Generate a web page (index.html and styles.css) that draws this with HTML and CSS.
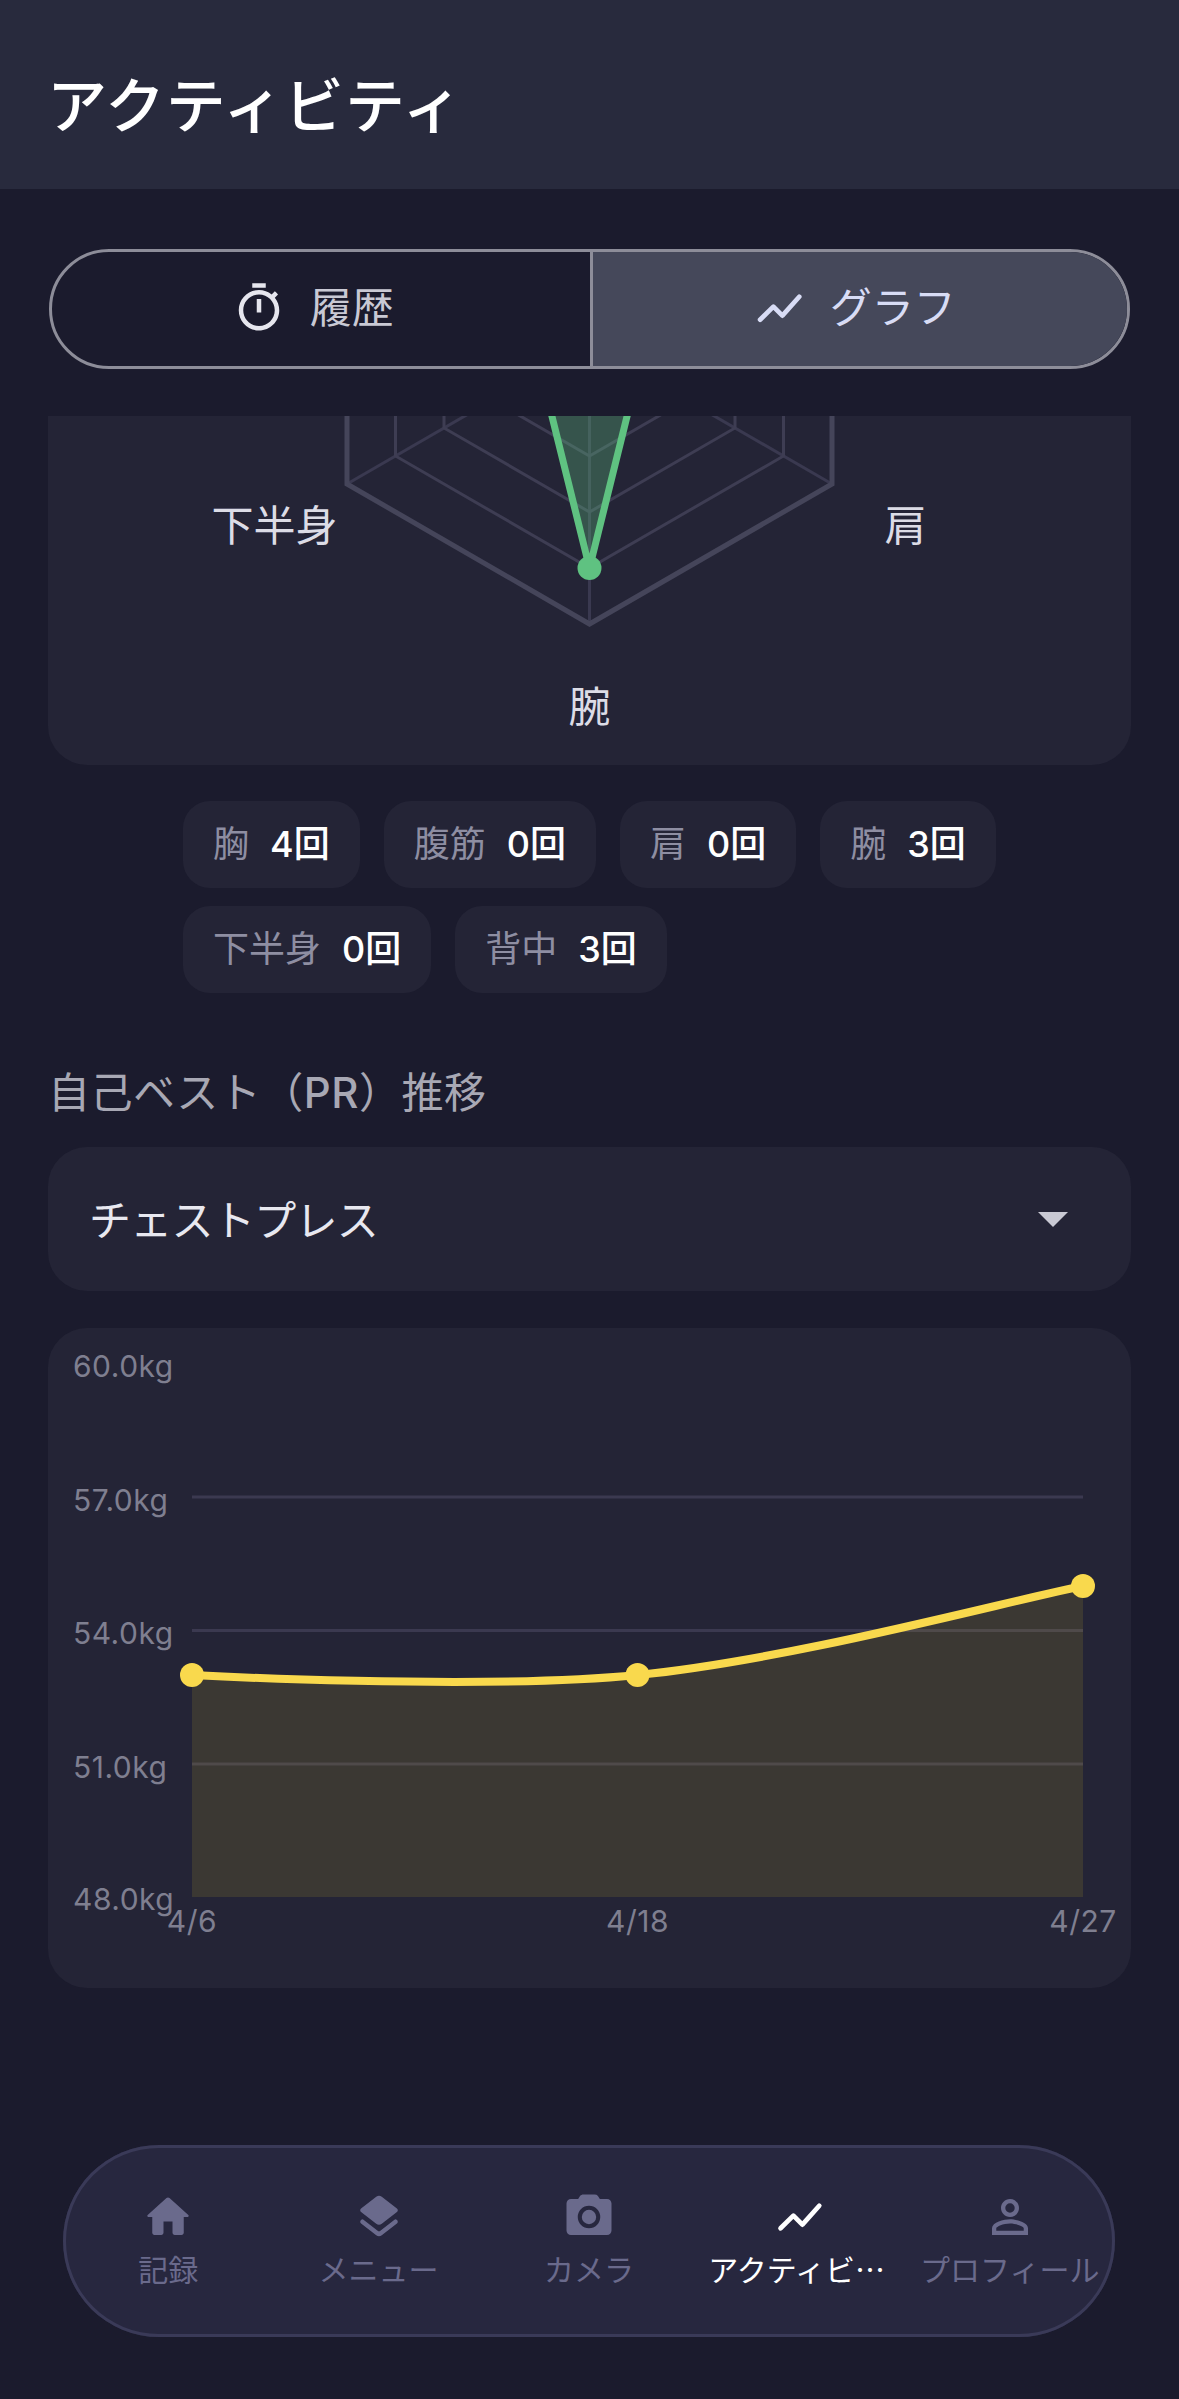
FILE: index.html
```html
<!DOCTYPE html>
<html lang="ja">
<head>
<meta charset="utf-8">
<title>アクティビティ</title>
<link rel="stylesheet" href="styles.css">
</head>
<body>
<div class="app">
  <header class="header"><h1 class="title">アクティビティ</h1></header>

  <div class="segment-wrap">
    <div class="segment">
      <div class="seg-btn">
        <svg class="seg-icon seg-icon-timer" viewBox="0 0 24 24"><path d="M15 1H9v2h6V1zm-4 13h2V8h-2v6zm8.03-6.61l1.42-1.42c-.43-.51-.9-.99-1.41-1.41l-1.42 1.42C16.07 4.74 14.12 4 12 4c-4.97 0-9 4.03-9 9s4.02 9 9 9 9-4.03 9-9c0-2.12-.74-4.07-1.97-5.61zM12 20c-3.87 0-7-3.13-7-7s3.13-7 7-7 7 3.13 7 7-3.13 7-7 7z"/></svg>
        <span class="seg-text">履歴</span>
      </div>
      <div class="seg-btn seg-btn-active">
        <svg class="seg-icon" viewBox="0 0 24 24"><polyline class="chart-stroke" points="3.6,17.2 9.5,11.4 13.5,15.4 21,7"/></svg>
        <span class="seg-text">グラフ</span>
      </div>
    </div>
  </div>

  <main class="scroll">
    <section class="radar-card">
      <svg class="radar" viewBox="48 416 1083 349">
        <g class="spokes">
          <line x1="589.5" y1="344" x2="589.5" y2="64"/>
          <line x1="589.5" y1="344" x2="832" y2="204"/>
          <line x1="589.5" y1="344" x2="832" y2="484"/>
          <line x1="589.5" y1="344" x2="589.5" y2="624"/>
          <line x1="589.5" y1="344" x2="347" y2="484"/>
          <line x1="589.5" y1="344" x2="347" y2="204"/>
        </g>
        <g class="rings">
          <polygon points="589.5,288 638,316 638,372 589.5,400 541,372 541,316"/>
          <polygon points="589.5,232 686.5,288 686.5,400 589.5,456 492.5,400 492.5,288"/>
          <polygon points="589.5,176 735,260 735,428 589.5,512 444,428 444,260"/>
          <polygon points="589.5,120 783.5,232 783.5,456 589.5,568 395.5,456 395.5,232"/>
          <polygon class="ring-outer" points="589.5,64 832,204 832,484 589.5,624 347,484 347,204"/>
        </g>
        <polygon class="radar-data" points="589.5,64 638,316 638,372 589.5,568 541,372 395.5,232"/>
        <circle class="radar-dot" cx="589.5" cy="568" r="12"/>
        <text class="radar-label" x="274.5" y="541">下半身</text>
        <text class="radar-label" x="905.5" y="541">肩</text>
        <text class="radar-label" x="589.5" y="722">腕</text>
      </svg>
    </section>

    <div class="chips">
      <div class="chip"><span class="chip-label">胸</span><span class="chip-value">4回</span></div>
      <div class="chip"><span class="chip-label">腹筋</span><span class="chip-value">0回</span></div>
      <div class="chip"><span class="chip-label">肩</span><span class="chip-value">0回</span></div>
      <div class="chip"><span class="chip-label">腕</span><span class="chip-value">3回</span></div>
      <div class="chip"><span class="chip-label">下半身</span><span class="chip-value">0回</span></div>
      <div class="chip"><span class="chip-label">背中</span><span class="chip-value">3回</span></div>
    </div>

    <h2 class="section-title">自己ベスト（<span class="latin">PR</span>）推移</h2>

    <div class="dropdown">
      <span class="dropdown-text">チェストプレス</span>
      <span class="caret"></span>
    </div>

    <section class="chart-card">
      <svg class="chart" viewBox="48 1329 1083 660">
        <g class="grid">
          <line x1="192" y1="1498" x2="1083" y2="1498"/>
          <line x1="192" y1="1631.5" x2="1083" y2="1631.5"/>
          <line x1="192" y1="1765" x2="1083" y2="1765"/>
        </g>
        <path class="area" d="M192 1676 C192 1676 481.5 1691.6 637.5 1676 C793.5 1660.4 1005 1602.6 1083 1587 L1083 1898 L192 1898 Z"/>
        <path class="curve" d="M192 1676 C192 1676 481.5 1691.6 637.5 1676 C793.5 1660.4 1005 1602.6 1083 1587"/>
        <circle class="point" cx="192" cy="1676" r="12"/>
        <circle class="point" cx="637.5" cy="1676" r="12"/>
        <circle class="point" cx="1083" cy="1587" r="12"/>
        <text class="axis" x="73" y="1378">60.0kg</text>
        <text class="axis" x="73" y="1512">57.0kg</text>
        <text class="axis" x="73" y="1645">54.0kg</text>
        <text class="axis" x="73" y="1779">51.0kg</text>
        <text class="axis" x="73" y="1911">48.0kg</text>
        <text class="axis axis-x" x="192" y="1933">4/6</text>
        <text class="axis axis-x" x="637.5" y="1933">4/18</text>
        <text class="axis axis-x" x="1083" y="1933">4/27</text>
      </svg>
    </section>
  </main>

  <nav class="nav">
    <div class="nav-item">
      <svg class="nav-icon" viewBox="0 0 24 24"><path d="M10 19v-5h4v5c0 .55.45 1 1 1h3c.55 0 1-.45 1-1v-7h1.7c.46 0 .68-.57.33-.87L12.67 3.6c-.38-.34-.96-.34-1.34 0l-8.36 7.53c-.34.3-.13.87.33.87H5v7c0 .55.45 1 1 1h3c.55 0 1-.45 1-1z"/></svg>
      <span class="nav-label">記録</span>
    </div>
    <div class="nav-item">
      <svg class="nav-icon" viewBox="0 0 24 24"><path d="M12.6 18.07a1 1 0 0 1-1.2 0l-6.15-4.78a.98.98 0 0 0-1.22 0 1 1 0 0 0 0 1.57l6.74 5.24c.72.56 1.74.56 2.46 0l6.74-5.24a1 1 0 0 0 0-1.57l-.01-.01a.98.98 0 0 0-1.22 0zM13.23 15.05l6.74-5.24a1 1 0 0 0 0-1.58l-6.74-5.24a2 2 0 0 0-2.46 0L4.03 8.23a1 1 0 0 0 0 1.58l6.74 5.24c.72.56 1.74.56 2.46 0z"/></svg>
      <span class="nav-label">メニュー</span>
    </div>
    <div class="nav-item">
      <svg class="nav-icon" viewBox="0 0 24 24"><path fill-rule="evenodd" d="M9.5 2c-.56 0-1.1.24-1.48.66L7.17 4H4c-1.1 0-2 .9-2 2v12c0 1.1.9 2 2 2h16c1.1 0 2-.9 2-2V6c0-1.1-.9-2-2-2h-3.17l-.85-1.34A2 2 0 0 0 14.5 2h-5zM12 7a5 5 0 1 1 0 10 5 5 0 0 1 0-10zm0 1.8a3.2 3.2 0 1 0 0 6.4 3.2 3.2 0 0 0 0-6.4z"/></svg>
      <span class="nav-label">カメラ</span>
    </div>
    <div class="nav-item nav-item-active">
      <svg class="nav-icon" viewBox="0 0 24 24"><polyline class="chart-stroke" points="3.8,17 9.5,11.4 13.5,15.4 21,7"/></svg>
      <span class="nav-label">アクティビティ</span>
    </div>
    <div class="nav-item">
      <svg class="nav-icon" viewBox="0 0 24 24"><path d="M12 5.9a2.1 2.1 0 1 1 0 4.2 2.1 2.1 0 0 1 0-4.2m0 9c2.97 0 6.1 1.46 6.1 2.1v1.1H5.9V17c0-.64 3.13-2.1 6.1-2.1M12 4C9.79 4 8 5.79 8 8s1.79 4 4 4 4-1.79 4-4-1.79-4-4-4zm0 9c-2.67 0-8 1.34-8 4v3h16v-3c0-2.66-5.33-4-8-4z"/></svg>
      <span class="nav-label">プロフィール</span>
    </div>
  </nav>
</div>
</body>
</html>
```
FILE: styles.css
```css
* { box-sizing: border-box; }
html, body { margin: 0; padding: 0; }
body {
  background: #1b1b2d;
  font-family: Inter, "Noto Sans CJK JP", sans-serif;
  color: #fff;
}
.app {
  position: relative;
  width: 1179px;
  height: 2399px;
  overflow: hidden;
  display: flex;
  flex-direction: column;
  background: #1b1b2d;
}
.header {
  height: 189px;
  flex: none;
  display: flex;
  align-items: center;
  padding: 22px 47px 0;
  background: #282a3d;
}
.title {
  margin: 0;
  font-size: 60px;
  line-height: 72px;
  font-weight: 500;
  letter-spacing: 0.9px;
  color: #fff;
}
.segment-wrap {
  flex: none;
  padding: 60px 49px 47px;
}
.segment {
  display: flex;
  height: 120px;
  border: 3px solid #8d8d99;
  border-radius: 60px;
  overflow: hidden;
}
.seg-btn {
  flex: 1 1 50%;
  display: flex;
  align-items: center;
  justify-content: center;
  gap: 24px;
  padding-right: 16px;
  font-size: 42px;
  color: #c9c9d4;
}
.seg-btn-active {
  background: #45485a;
  border-left: 3px solid #8d8d99;
  padding-right: 12px;
  color: #d8dcf5;
}
.seg-text { margin-bottom: 10px; }
.seg-icon {
  width: 54px;
  height: 54px;
  flex: none;
  fill: #e6e6ee;
  margin-bottom: 2px;
}
.chart-stroke {
  fill: none;
  stroke: currentColor;
  stroke-width: 2.1;
  stroke-linecap: round;
  stroke-linejoin: round;
}
.scroll {
  flex: 1;
  min-height: 0;
  overflow: hidden;
  padding: 0 48px;
}
.radar-card {
  height: 349px;
  background: #242436;
  border-radius: 0 0 39px 39px;
}
.radar { display: block; width: 1083px; height: 349px; }
.spokes line { stroke: #3a3950; stroke-width: 3; }
.rings polygon { fill: none; stroke: #3e3d53; stroke-width: 3; }
.rings .ring-outer { stroke: #45455a; stroke-width: 5; }
.radar-data {
  fill: rgba(95, 194, 129, 0.3);
  stroke: #5fc281;
  stroke-width: 7;
  stroke-linejoin: round;
}
.radar-dot { fill: #5fc281; }
.radar-label {
  font-size: 42px;
  fill: #dcdce6;
  text-anchor: middle;
}
.chips {
  display: flex;
  flex-wrap: wrap;
  gap: 18px 24px;
  width: 830px;
  margin: 36px 0 0 135px;
}
.chip {
  display: flex;
  gap: 21px;
  padding: 18px 30px;
  line-height: 51px;
  font-size: 36px;
  background: #242436;
  border-radius: 27px;
}
.chip-label { color: #8e8ea2; }
.chip-value { color: #fff; font-weight: 500; }
.section-title {
  margin: 67px 0 0 0;
  font-size: 42px;
  line-height: 66px;
  font-weight: 400;
  letter-spacing: 0.5px;
  color: #a8a8b4;
}
.latin { font-weight: 500; }
.dropdown {
  display: flex;
  align-items: center;
  justify-content: space-between;
  height: 144px;
  margin-top: 21px;
  padding: 0 63px 0 41px;
  font-size: 42px;
  color: #e8e8f0;
  background: #242436;
  border-radius: 39px;
}
.dropdown-text { letter-spacing: -0.7px; margin-bottom: 4px; }
.caret {
  width: 0;
  height: 0;
  border-left: 15px solid transparent;
  border-right: 15px solid transparent;
  border-top: 15px solid #c9c9d4;
}
.chart-card {
  height: 660px;
  margin-top: 37px;
  background: #242436;
  border-radius: 39px;
}
.chart { display: block; width: 1083px; height: 660px; }
.grid line { stroke: #3b3950; stroke-width: 3; }
.area { fill: rgba(249, 218, 27, 0.11); }
.curve { fill: none; stroke: #f9d94d; stroke-width: 8; }
.point { fill: #f9d94d; }
.axis {
  font-size: 30px;
  fill: #7f7f90;
  letter-spacing: 0.5px;
}
.axis-x { text-anchor: middle; }
.nav {
  position: absolute;
  left: 63px;
  top: 2145px;
  width: 1052px;
  height: 192px;
  display: grid;
  grid-template-columns: repeat(5, 1fr);
  background: #27273f;
  box-shadow: inset 0 0 0 3px #3a3a58;
  border-radius: 96px;
}
.nav-item {
  display: flex;
  flex-direction: column;
  align-items: center;
  min-width: 0;
  padding: 45px 14px 0;
  color: #6a6a8c;
}
.nav-item-active { color: #fff; }
.nav-icon { width: 54px; height: 54px; flex: none; fill: currentColor; }
.nav-label {
  max-width: 100%;
  margin-top: 2px;
  font-family: "Noto Sans CJK JP", sans-serif;
  font-size: 30px;
  line-height: 44px;
  white-space: nowrap;
}
.nav-item-active .nav-label {
  overflow: hidden;
  text-overflow: ellipsis;
}
```
